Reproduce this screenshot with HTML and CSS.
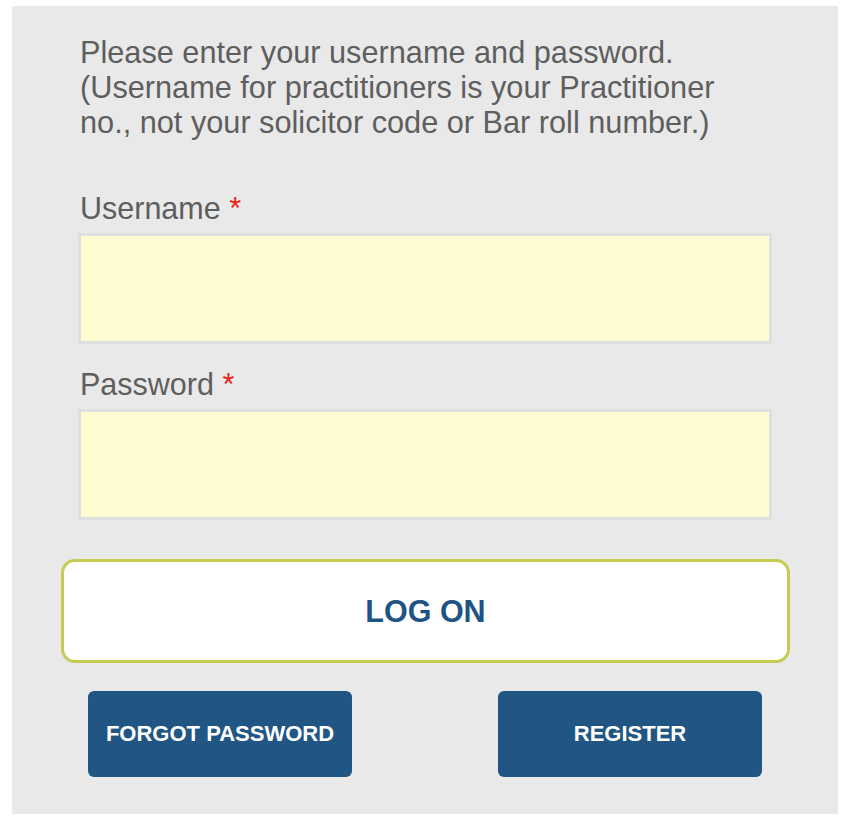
FILE: index.html
```html
<!DOCTYPE html>
<html lang="en">
<head>
<meta charset="utf-8">
<title>Log on</title>
<link rel="stylesheet" href="styles.css">
</head>
<body>
<div class="panel">
  <p class="intro">Please enter your username and password.<br>(Username for practitioners is your Practitioner<br>no., not your solicitor code or Bar roll number.)</p>
  <form class="form">
    <label class="label" for="u">Username <span class="req">*</span></label>
    <input class="field" id="u" type="text">
    <label class="label label-pw" for="p">Password <span class="req">*</span></label>
    <input class="field" id="p" type="password">
    <button type="button" class="logon">LOG ON</button>
    <div class="actions">
      <button type="button" class="btn">FORGOT PASSWORD</button>
      <button type="button" class="btn">REGISTER</button>
    </div>
  </form>
</div>
</body>
</html>
```
FILE: styles.css
```css
html, body {
  margin: 0;
  padding: 0;
  background: #ffffff;
}
body {
  font-family: "Liberation Sans", Arial, Helvetica, sans-serif;
}
.panel {
  box-sizing: border-box;
  width: 826px;
  height: 808px;
  margin: 6px 0 0 12px;
  background: #e9e9e9;
  padding-top: 29px;
}
.intro {
  margin: 0 0 0 68px;
  font-size: 30.7px;
  line-height: 35px;
  color: #5e5e5e;
}
.form {
  display: flex;
  flex-direction: column;
  margin-top: 51px;
}
.label {
  display: block;
  margin-left: 68px;
  font-size: 30.5px;
  line-height: 35px;
  color: #5e5e5e;
}
.label-pw {
  margin-top: 23px;
}
.req {
  color: #e3261c;
}
.field {
  box-sizing: border-box;
  display: block;
  width: 694px;
  height: 111px;
  margin: 7px 0 0 66px;
  background: #fefdd1;
  border: 3px solid #dfdfdf;
  padding: 0 12px;
  outline: none;
  font-size: 20px;
}
.logon {
  box-sizing: border-box;
  width: 729px;
  height: 104px;
  margin: 39px 0 0 49px;
  background: #ffffff;
  border: 3px solid #c6cc52;
  border-radius: 14px;
  color: #1f5384;
  font-family: "Liberation Sans", Arial, sans-serif;
  font-weight: bold;
  font-size: 30.5px;
  cursor: pointer;
}
.actions {
  display: flex;
  justify-content: space-between;
  width: 674px;
  margin: 28px 0 0 76px;
}
.btn {
  width: 264px;
  height: 86px;
  border: none;
  border-radius: 6px;
  background: #215584;
  color: #ffffff;
  font-family: "Liberation Sans", Arial, sans-serif;
  font-weight: bold;
  font-size: 22px;
  cursor: pointer;
}
```
